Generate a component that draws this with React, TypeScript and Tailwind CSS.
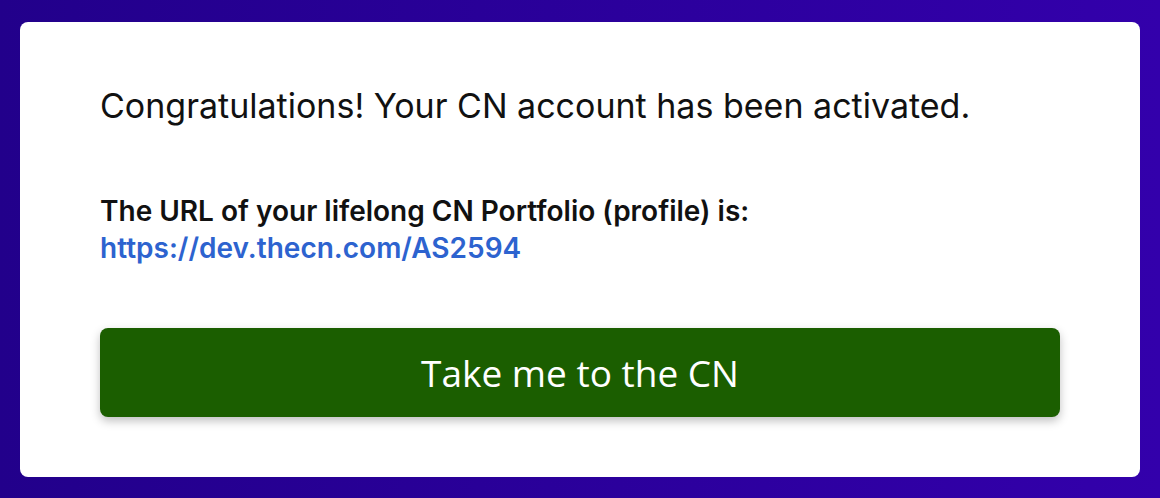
export default function App() {
  return (
    <div className="w-[1160px] h-[498px] bg-gradient-to-r from-[#22008b] to-[#3300ab] px-5 pt-[22px] pb-[21px]">
      <div className="h-full rounded-lg bg-white px-20 pt-[64px]">
        <h1 className="text-[34px] leading-[40px] text-[#111] font-['Inter',sans-serif]">
          Congratulations! Your CN account has been activated.
        </h1>
        <div className="mt-[67px] font-['Inter',sans-serif] text-[28px] leading-[37px]">
          <p className="font-semibold text-[#111]">The URL of your lifelong CN Portfolio (profile) is:</p>
          <a href="#" className="font-semibold text-[#2d63cf]">https://dev.thecn.com/AS2594</a>
        </div>
        <button className="mt-[61px] flex h-[89px] w-full items-center justify-center rounded-lg bg-[#1b5e00] font-['Open_Sans',sans-serif] font-medium text-[37px] text-white shadow-[0_4px_10px_rgba(0,0,0,0.25)]">
          Take me to the CN
        </button>
      </div>
    </div>
  );
}
